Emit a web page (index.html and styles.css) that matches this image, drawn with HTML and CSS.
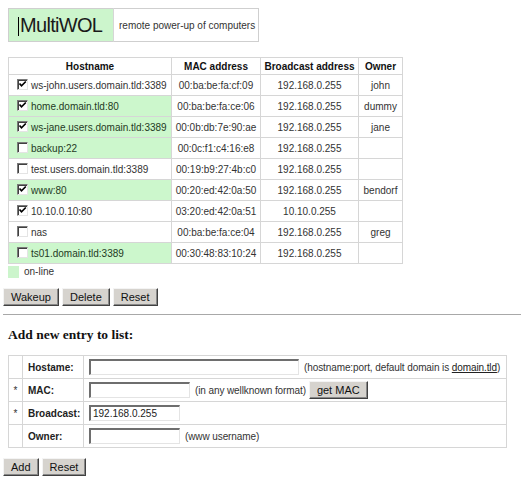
FILE: index.html
```html
<!DOCTYPE html>
<html>
<head>
<meta charset="utf-8">
<title>MultiWOL</title>
<link rel="stylesheet" href="styles.css">
</head>
<body>
<table class="brand">
  <tr>
    <td class="brand-name"><span class="caret"></span>MultiWOL</td>
    <td class="brand-tag">remote power-up of computers</td>
  </tr>
</table>

<table class="hosts">
  <colgroup>
    <col class="c-host"><col class="c-mac"><col class="c-bc"><col class="c-own">
  </colgroup>
  <thead>
    <tr><th>Hostname</th><th>MAC address</th><th>Broadcast address</th><th>Owner</th></tr>
  </thead>
  <tbody>
    <tr><td class="host"><span class="cb on"><svg viewBox="0 0 9 9" width="9" height="9"><path d="M1.5 3.5 L3.5 5.8 L7.8 1.5" fill="none" stroke="#000" stroke-width="1.7"/></svg></span>ws-john.users.domain.tld:3389</td><td>00:ba:be:fa:cf:09</td><td>192.168.0.255</td><td>john</td></tr>
    <tr><td class="host online"><span class="cb on"><svg viewBox="0 0 9 9" width="9" height="9"><path d="M1.5 3.5 L3.5 5.8 L7.8 1.5" fill="none" stroke="#000" stroke-width="1.7"/></svg></span>home.domain.tld:80</td><td>00:ba:be:fa:ce:06</td><td>192.168.0.255</td><td>dummy</td></tr>
    <tr><td class="host online"><span class="cb on"><svg viewBox="0 0 9 9" width="9" height="9"><path d="M1.5 3.5 L3.5 5.8 L7.8 1.5" fill="none" stroke="#000" stroke-width="1.7"/></svg></span>ws-jane.users.domain.tld:3389</td><td>00:0b:db:7e:90:ae</td><td>192.168.0.255</td><td>jane</td></tr>
    <tr><td class="host online"><span class="cb"></span>backup:22</td><td>00:0c:f1:c4:16:e8</td><td>192.168.0.255</td><td></td></tr>
    <tr><td class="host"><span class="cb"></span>test.users.domain.tld:3389</td><td>00:19:b9:27:4b:c0</td><td>192.168.0.255</td><td></td></tr>
    <tr><td class="host online"><span class="cb on"><svg viewBox="0 0 9 9" width="9" height="9"><path d="M1.5 3.5 L3.5 5.8 L7.8 1.5" fill="none" stroke="#000" stroke-width="1.7"/></svg></span>www:80</td><td>00:20:ed:42:0a:50</td><td>192.168.0.255</td><td>bendorf</td></tr>
    <tr><td class="host"><span class="cb on"><svg viewBox="0 0 9 9" width="9" height="9"><path d="M1.5 3.5 L3.5 5.8 L7.8 1.5" fill="none" stroke="#000" stroke-width="1.7"/></svg></span>10.10.0.10:80</td><td>03:20:ed:42:0a:51</td><td>10.10.0.255</td><td></td></tr>
    <tr><td class="host"><span class="cb"></span>nas</td><td>00:ba:be:fa:ce:04</td><td>192.168.0.255</td><td>greg</td></tr>
    <tr><td class="host online"><span class="cb"></span>ts01.domain.tld:3389</td><td>00:30:48:83:10:24</td><td>192.168.0.255</td><td></td></tr>
  </tbody>
</table>

<div class="legend"><span class="swatch"></span>on-line</div>

<div class="actions">
  <button class="btn">Wakeup</button>
  <button class="btn">Delete</button>
  <button class="btn">Reset</button>
</div>

<hr class="sep">

<h3 class="add-title">Add new entry to list:</h3>

<table class="entry">
  <colgroup><col class="c-star"><col class="c-label"><col class="c-field"></colgroup>
  <tr><td class="star"></td><td class="label">Hostame:</td><td class="field"><input class="inp w-host" type="text"><span class="hint">(hostname:port, default domain is <a href="#" class="lnk">domain.tld</a>)</span></td></tr>
  <tr><td class="star">*</td><td class="label">MAC:</td><td class="field"><input class="inp w-mac" type="text"><span class="hint">(in any wellknown format)</span><button class="btn getmac">get MAC</button></td></tr>
  <tr><td class="star">*</td><td class="label">Broadcast:</td><td class="field"><input class="inp w-bc" type="text" value="192.168.0.255"></td></tr>
  <tr><td class="star"></td><td class="label">Owner:</td><td class="field"><input class="inp w-bc" type="text"><span class="hint">(www username)</span></td></tr>
</table>

<div class="form-actions">
  <button class="btn">Add</button>
  <button class="btn">Reset</button>
</div>
</body>
</html>
```

FILE: styles.css
```css
html, body {
  margin: 0;
  padding: 0;
  background: #fff;
}
body {
  font-family: "Liberation Sans", Arial, sans-serif;
  font-size: 10px;
  color: #222;
}

/* brand box */
.brand {
  margin: 8px 0 0 8px;
  border-collapse: collapse;
  border: 1px solid #cfcfcf;
  height: 34px;
}
.brand td {
  padding: 0;
  vertical-align: middle;
}
.brand-name {
  width: 95px;
  background: #ccf5cc;
  padding-left: 9px !important;
  font-size: 20px;
  letter-spacing: -0.7px;
  color: #1a1a1a;
  border-right: 1px solid #d6d6d6;
}
.caret {
  display: inline-block;
  width: 0;
  height: 19px;
  border-left: 1px solid #000;
  vertical-align: -4px;
  margin-right: 1px;
}
.brand-tag {
  width: 139px;
  padding-left: 5px !important;
  color: #333;
}

/* hosts table */
.hosts {
  margin: 15px 0 0 8px;
  border-collapse: collapse;
  table-layout: fixed;
  width: 394px;
}
.c-host { width: 163px; }
.c-mac { width: 89px; }
.c-bc { width: 98px; }
.c-own { width: 44px; }
.hosts th, .hosts td {
  border: 1px solid #d6d6d6;
  padding: 0;
  text-align: center;
  white-space: nowrap;
}
.hosts th {
  height: 16px;
  font-weight: bold;
  color: #111;
}
.hosts td {
  height: 20px;
  color: #333;
}
.hosts td.host {
  text-align: left;
  padding-left: 8px;
}
.hosts td.online {
  background: #ccf7cc;
  color: #1f3a1f;
}
.cb {
  display: inline-block;
  box-sizing: border-box;
  width: 11px;
  height: 11px;
  margin-right: 3px;
  vertical-align: -1px;
  background: #fff;
  border-style: solid;
  border-width: 1px;
  border-color: #7a7a7a #e4e4e4 #e4e4e4 #7a7a7a;
  box-shadow: inset 1px 1px 0 #404040;
  position: relative;
}
.cb svg {
  position: absolute;
  left: 0;
  top: 0;
}

/* legend */
.legend {
  margin: 1px 0 0 8px;
  display: flex;
  align-items: center;
  height: 13px;
  color: #333;
}
.swatch {
  display: inline-block;
  width: 11px;
  height: 12px;
  background: #ccf5cc;
  margin-right: 5px;
}

/* buttons */
.btn {
  font-family: "Liberation Sans", Arial, sans-serif;
  font-size: 11px;
  color: #111;
  background: #d6d3ce;
  height: 18px;
  padding: 0 7px;
  margin: 0;
  border-style: solid;
  border-width: 1px;
  border-color: #f4f4f4 #404040 #404040 #f4f4f4;
  box-shadow: inset -1px -1px 0 #888;
  border-radius: 0;
  line-height: 14px;
}
.actions {
  margin: 10px 0 0 3px;
  display: flex;
  gap: 2px;
}
.actions .btn + .btn { margin-left: 1px; }

.sep {
  margin: 8px 4px 0 3px;
  border: 0;
  border-top: 1px solid #a8a8a8;
  height: 0;
}

.add-title {
  font-family: "Liberation Serif", "Times New Roman", serif;
  font-size: 13.5px;
  font-weight: bold;
  color: #111;
  margin: 12px 0 0 8px;
  line-height: 16px;
}

/* entry table */
.entry {
  margin: 12px 0 0 8px;
  border-collapse: collapse;
  table-layout: fixed;
  width: 499px;
}
.c-star { width: 14px; }
.c-label { width: 61px; }
.entry td {
  border: 1px solid #d6d6d6;
  height: 22px;
  padding: 0;
  white-space: nowrap;
}
.entry td.star {
  text-align: center;
  color: #333;
}
.entry td.label {
  font-weight: bold;
  padding-left: 5px;
  color: #222;
}
.entry td.field {
  padding-left: 5px;
}
.inp {
  box-sizing: border-box;
  height: 16px;
  padding: 0 2px;
  margin: 0;
  vertical-align: middle;
  font-family: "Liberation Sans", Arial, sans-serif;
  font-size: 10px;
  color: #222;
  background: #fff;
  border-style: solid;
  border-width: 2px 1px 1px 2px;
  border-color: #6e6e6e #e4e4e4 #e4e4e4 #6e6e6e;
  outline: none;
}
.w-host { width: 210px; }
.w-mac { width: 101px; }
.w-bc { width: 91px; }
.hint {
  margin-left: 5px;
  vertical-align: middle;
  color: #333;
  letter-spacing: -0.1px;
}
.lnk {
  color: #222;
  text-decoration: underline;
}
.getmac {
  margin-left: 3px;
  vertical-align: middle;
  padding: 0 7px;
  height: 18px;
}

.form-actions {
  margin: 10px 0 0 3px;
  display: flex;
  gap: 3px;
}
```
